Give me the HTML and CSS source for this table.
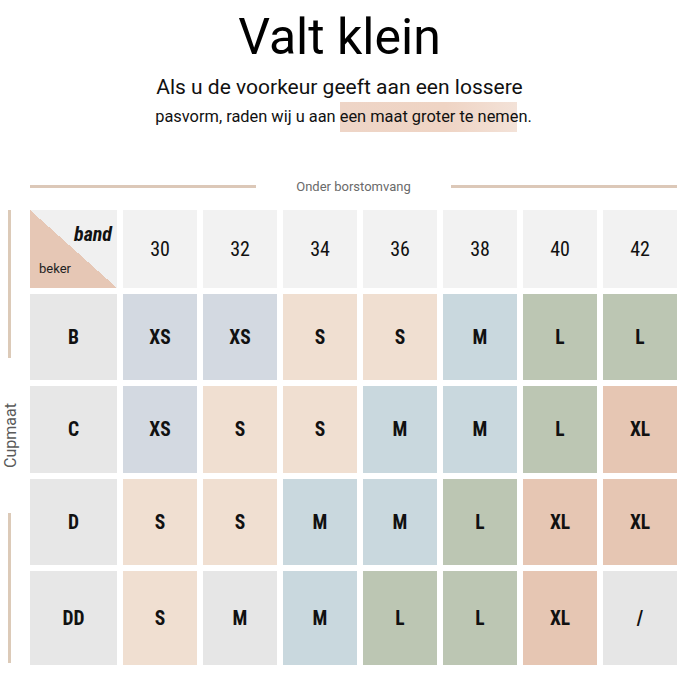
FILE: index.html
```html
<!DOCTYPE html>
<html>
<head>
<meta charset="utf-8">
<link rel="stylesheet" href="styles.css">
</head>
<body>
<div class="page">
  <header class="intro">
    <h1 class="title">Valt klein</h1>
    <p class="lead">Als u de voorkeur geeft aan een lossere</p>
    <p class="sub">pasvorm, raden wij u aan <span class="mark">een maat groter te nemen.</span></p>
  </header>

  <div class="axis">
    <span class="axis-line"></span>
    <span class="axis-label">Onder borstomvang</span>
    <span class="axis-line"></span>
  </div>

  <div class="chart">
    <div class="side">
      <span class="side-bar top"></span>
      <span class="side-label">Cupmaat</span>
      <span class="side-bar bottom"></span>
    </div>
    <div class="grid">
      <div class="cell corner"><span class="band">band</span><span class="beker">beker</span></div>
      <div class="cell head">30</div>
      <div class="cell head">32</div>
      <div class="cell head">34</div>
      <div class="cell head">36</div>
      <div class="cell head">38</div>
      <div class="cell head">40</div>
      <div class="cell head">42</div>

      <div class="cell label">B</div>
      <div class="cell xs">XS</div>
      <div class="cell xs">XS</div>
      <div class="cell s">S</div>
      <div class="cell s">S</div>
      <div class="cell m">M</div>
      <div class="cell l">L</div>
      <div class="cell l">L</div>

      <div class="cell label">C</div>
      <div class="cell xs">XS</div>
      <div class="cell s">S</div>
      <div class="cell s">S</div>
      <div class="cell m">M</div>
      <div class="cell m">M</div>
      <div class="cell l">L</div>
      <div class="cell xl">XL</div>

      <div class="cell label">D</div>
      <div class="cell s">S</div>
      <div class="cell s">S</div>
      <div class="cell m">M</div>
      <div class="cell m">M</div>
      <div class="cell l">L</div>
      <div class="cell xl">XL</div>
      <div class="cell xl">XL</div>

      <div class="cell label">DD</div>
      <div class="cell s">S</div>
      <div class="cell gray">M</div>
      <div class="cell m">M</div>
      <div class="cell l">L</div>
      <div class="cell l">L</div>
      <div class="cell xl">XL</div>
      <div class="cell gray">/</div>
    </div>
  </div>
</div>
</body>
</html>
```

FILE: styles.css
```css
* { box-sizing: border-box; }
html, body { margin: 0; padding: 0; background: #fff; }
body { font-family: Roboto, "Liberation Sans", sans-serif; color: #111; }

.page { width: 679px; height: 679px; overflow: hidden; }

.intro { text-align: center; padding-top: 8px; }
.title {
  margin: 0;
  font-size: 50px;
  font-weight: 400;
  line-height: 58px;
  color: #000;
  letter-spacing: 0;
}
.lead {
  margin: 8px 0 0 0;
  font-size: 21px;
  line-height: 26px;
  color: #111;
}
.sub {
  margin: 4px 0 0 8px;
  font-size: 16.4px;
  line-height: 26px;
  color: #111;
}
.mark {
  background-image: linear-gradient(90deg, #eed5c7 0%, #efd4c4 60%, #f3e2d8 100%);
  background-size: calc(100% - 12px) 100%;
  background-repeat: no-repeat;
  background-position: -3px 0;
  padding: 5px 0 6px 0;
}

.axis {
  display: flex;
  align-items: center;
  margin: 48px 2px 0 30px;
  height: 16px;
}
.axis-line { flex: 1; height: 3px; background: #dcc8b8; }
.axis-label {
  font-size: 13px;
  color: #6a6a6a;
  padding: 0 40px;
}

.chart {
  display: flex;
  margin-top: 16px;
}
.side {
  width: 30px;
  display: flex;
  flex-direction: column;
  align-items: flex-start;
  padding-left: 8px;
}
.side-bar { width: 3px; background: #dccab8; display: block; }
.side-bar.top { height: 148px; }
.side-bar.bottom { height: 150px; }
.side-label {
  height: 155px;
  writing-mode: vertical-rl;
  transform: rotate(180deg);
  font-size: 16px;
  color: #5a5a5a;
  margin-left: -7px;
  text-align: center;
  display: flex;
  align-items: center;
  justify-content: center;
}

.grid {
  display: grid;
  grid-template-columns: 87px repeat(7, 74px);
  grid-template-rows: 78px 86px 87px 86px 94px;
  column-gap: 6px;
  row-gap: 6px;
}
.cell {
  display: flex;
  align-items: center;
  justify-content: center;
  font-family: "Liberation Sans Narrow", "Roboto Condensed", "DejaVu Sans Condensed", sans-serif;
  font-size: 19.5px;
  font-weight: 700;
  color: #111;
}
.head { background: #f2f2f2; font-weight: 400; font-size: 20px; }
.label { background: #e7e7e7; }
.xs { background: #d3d9e1; }
.s { background: #f0dfd1; }
.m { background: #c9d8de; }
.l { background: #bcc6b3; }
.xl { background: #e6c6b3; }
.gray { background: #e6e6e6; }

.corner {
  position: relative;
  background: linear-gradient(to top right, #e6c7b5 50%, #f0f0f0 50%);
}
.band {
  position: absolute;
  top: 12px;
  right: 5px;
  font-style: italic;
  font-weight: 700;
  font-size: 20px;
}
.beker {
  position: absolute;
  left: 9px;
  bottom: 12px;
  font-family: Roboto, "Liberation Sans", sans-serif;
  font-weight: 400;
  font-size: 13px;
  color: #222;
}
```
